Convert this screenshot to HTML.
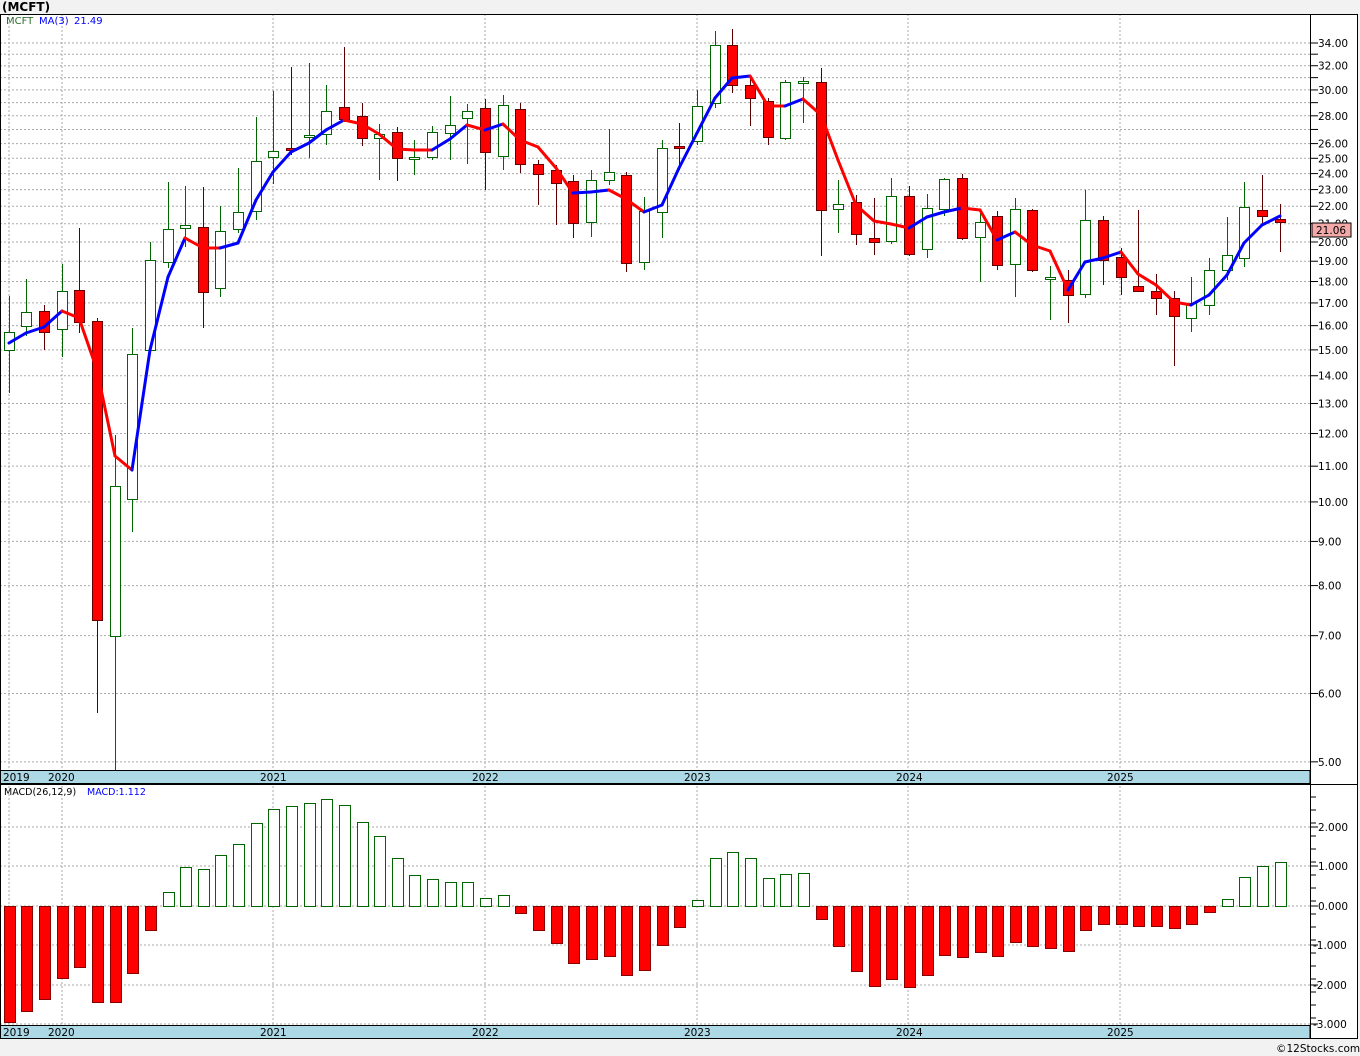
<!DOCTYPE html>
<html><head><meta charset="utf-8"><style>
html,body{margin:0;padding:0;background:#f2f2f2;}
body{width:1360px;height:1056px;overflow:hidden;font-family:"DejaVu Sans",sans-serif;}
svg{position:absolute;left:0;top:0;}
</style></head><body>
<svg id="s" width="1360" height="1056" xmlns="http://www.w3.org/2000/svg"></svg>
<script>
const s=document.getElementById('s');let h='';
const f="font-family='DejaVu Sans, sans-serif'";
h+=`<rect x="0" y="14" width="1358" height="1025" fill="#fff"/>`;
h+=`<text x="2" y="11" font-size="12" font-weight="bold" ${f} fill="#000">(MCFT)</text>`;
const Y=p=>43+375*Math.log(34/p);
for(let p=5;p<=34;p++){const y=Y(p);h+=`<line x1="0" x2="1310" y1="${y}" y2="${y}" stroke="#aaa" stroke-dasharray="2,2"/><line x1="1310" x2="1318" y1="${y}" y2="${y}" stroke="#000"/>`;
 if([27,29,31,33].indexOf(p)<0)h+=`<text x="1318" y="${y+4}" font-size="10.5" ${f}>${p.toFixed(2)}</text>`;}
const gx=[9,62,273,485,697,908,1120];
gx.forEach(x=>{h+=`<line x1="${x}" x2="${x}" y1="14" y2="1024" stroke="#aaa" stroke-dasharray="2,2"/>`;});
[[827,'2.000'],[866,'1.000'],[906,'0.000'],[945,'-1.000'],[985,'-2.000'],[1024,'-3.000']].forEach(([y,t])=>{h+=`<line x1="0" x2="1310" y1="${y}" y2="${y}" stroke="#aaa" stroke-dasharray="2,2"/><line x1="1310" x2="1318" y1="${y}" y2="${y}" stroke="#000"/><text x="${t[0]=='-'?1313:1318}" y="${y+4}" font-size="10.5" ${f}>${t}</text>`;});
for(let y=797;y<1030;y+=13){h+=`<line x1="1310" x2="1316" y1="${y}" y2="${y}" stroke="#000"/>`;}
const C=[[9,296,393,332,350,1],[26,279,336,312,326,1],[44,305,350,311,332,0],[62,264,357,291,329,1],[79,228,333,290,322,0],[97,318,713,321,620,0],[115,435,770,486,636,1],[132,328,532,354,499,1],[150,242,350,260,350,1],[168,182,268,229,262,1],[185,186,247,225,228,1],[203,187,328,227,292,0],[220,206,297,231,288,1],[238,168,233,212,229,1],[256,117,220,161,211,1],[273,91,184,151,157,1],[291,67,155,148,150,0],[309,63,158,135,137,1],[326,85,145,111,134,1],[344,47,122,107,119,0],[362,103,146,116,138,0],[379,124,180,134,138,1],[397,127,181,132,158,0],[414,140,175,157,158,1],[432,126,160,132,157,1],[450,96,160,125,133,1],[467,104,164,111,118,1],[485,99,190,108,152,0],[503,95,170,105,156,1],[520,103,173,109,164,0],[538,160,205,164,174,0],[556,165,225,170,183,0],[573,175,238,181,223,0],[591,170,237,180,222,1],[609,129,185,172,180,1],[626,172,272,175,263,0],[644,197,270,211,262,1],[662,140,238,148,212,1],[679,123,170,146,148,0],[697,90,145,106,141,1],[715,31,108,45,103,1],[732,29,93,45,85,0],[750,79,126,85,98,0],[768,98,145,101,137,0],[785,80,140,82,138,1],[803,77,123,81,83,1],[821,68,256,82,210,0],[838,180,233,204,209,1],[856,195,245,202,234,0],[874,198,255,238,242,0],[891,178,244,196,241,1],[909,186,256,196,254,0],[927,194,258,208,249,1],[944,178,216,179,209,1],[962,174,240,178,238,0],[980,211,282,222,237,1],[997,211,270,216,265,0],[1015,198,297,209,264,1],[1032,209,272,210,270,0],[1050,266,320,277,279,1],[1068,270,323,280,295,0],[1085,190,298,220,294,1],[1103,216,285,220,260,0],[1121,248,295,257,277,0],[1138,210,292,286,291,0],[1156,274,315,291,298,0],[1174,291,366,298,316,0],[1191,277,332,303,318,1],[1209,258,315,270,305,1],[1227,217,280,255,270,1],[1244,182,267,207,258,1],[1262,175,223,210,216,0],[1280,204,252,219,222,0]];
C.forEach(([x,hi,lo,t,b,u])=>{const c=u?'#006400':'#5a0000';
 h+=`<line x1="${x}.5" x2="${x}.5" y1="${hi}" y2="${lo}" stroke="${c}"/>`;
 h+=`<rect x="${x-5}.5" y="${t}.5" width="10" height="${Math.max(b-t,2)}" fill="${u?'#fff':'#f00'}" stroke="${u?'#006400':'#600'}"/>`;});
const M=[343,333,327,311,318,370,456,470,350,277,238,248,248,243,200,172,152,143,130,120,124,134,149,150,150,139,125,130,124,140,147,168,193,192,190,199,212,205,168,133,98,78,76,106,106,99,115,160,205,221,224,228,217,212,208,210,240,232,245,251,290,262,258,252,274,285,302,305,295,275,243,225,216];
for(let i=1;i<M.length;i++){const x0=C[i-1][0],x1=C[i][0];h+=`<line x1="${x0}" y1="${M[i-1]}" x2="${x1}" y2="${M[i]}" stroke="${M[i]<M[i-1]?'#00f':'#f00'}" stroke-width="3" stroke-linecap="round"/>`;}
h+=`<text x="6" y="24" font-size="10" ${f} fill="#2e6b2e">MCFT</text><text x="39" y="24" font-size="10" ${f} fill="#00f">MA(3)</text><text x="74" y="24" font-size="10" ${f} fill="#00f">21.49</text>`;
h+=`<rect x="1312" y="223" width="39" height="14" fill="#f4a9a9" stroke="#000"/><text x="1316" y="234" font-size="10.5" ${f}>21.06</text>`;
const B=[1022,1011,999,978,967,1002,1002,973,930,892,867,869,855,844,823,809,806,803,799,805,822,836,858,875,879,882,882,898,895,913,930,943,963,959,956,975,970,945,927,900,858,852,858,878,874,873,919,946,971,986,979,987,975,955,957,952,956,942,946,948,951,930,924,924,926,926,928,924,912,899,877,866,862];
B.forEach((y,i)=>{const x=C[i][0];if(y<906)h+=`<rect x="${x-5}.5" y="${y}.5" width="11" height="${906-y}" fill="#fff" stroke="#006400"/>`;else h+=`<rect x="${x-5}.5" y="906.5" width="11" height="${y-906}" fill="#f00" stroke="#800"/>`;});
h+=`<text x="4" y="795" font-size="9.5" ${f}>MACD(26,12,9)</text><text x="87" y="795" font-size="9.5" ${f} fill="#00f">MACD:1.112</text>`;
const yrs=[[3,'2019'],[48,'2020'],[260,'2021'],[472,'2022'],[684,'2023'],[896,'2024'],[1107,'2025']];
[[770,783],[1025,1038]].forEach(([a,b])=>{h+=`<rect x="0" y="${a}.5" width="1310" height="${b-a}" fill="#add8e6" stroke="#000"/>`;yrs.forEach(([x,t])=>{h+=`<text x="${x}" y="${b-2}" font-size="10.5" ${f}>${t}</text>`;});});
h+=`<rect x="0.5" y="14.5" width="1310" height="1024" fill="none" stroke="#000"/><line x1="0" x2="1358" y1="784.5" y2="784.5" stroke="#000"/><rect x="1310.5" y="14.5" width="47" height="1024" fill="none" stroke="#000"/>`;
h+=`<text x="1276" y="1052" font-size="10.5" ${f}>©12Stocks.com</text>`;
s.innerHTML=h;
</script>
</body></html>
